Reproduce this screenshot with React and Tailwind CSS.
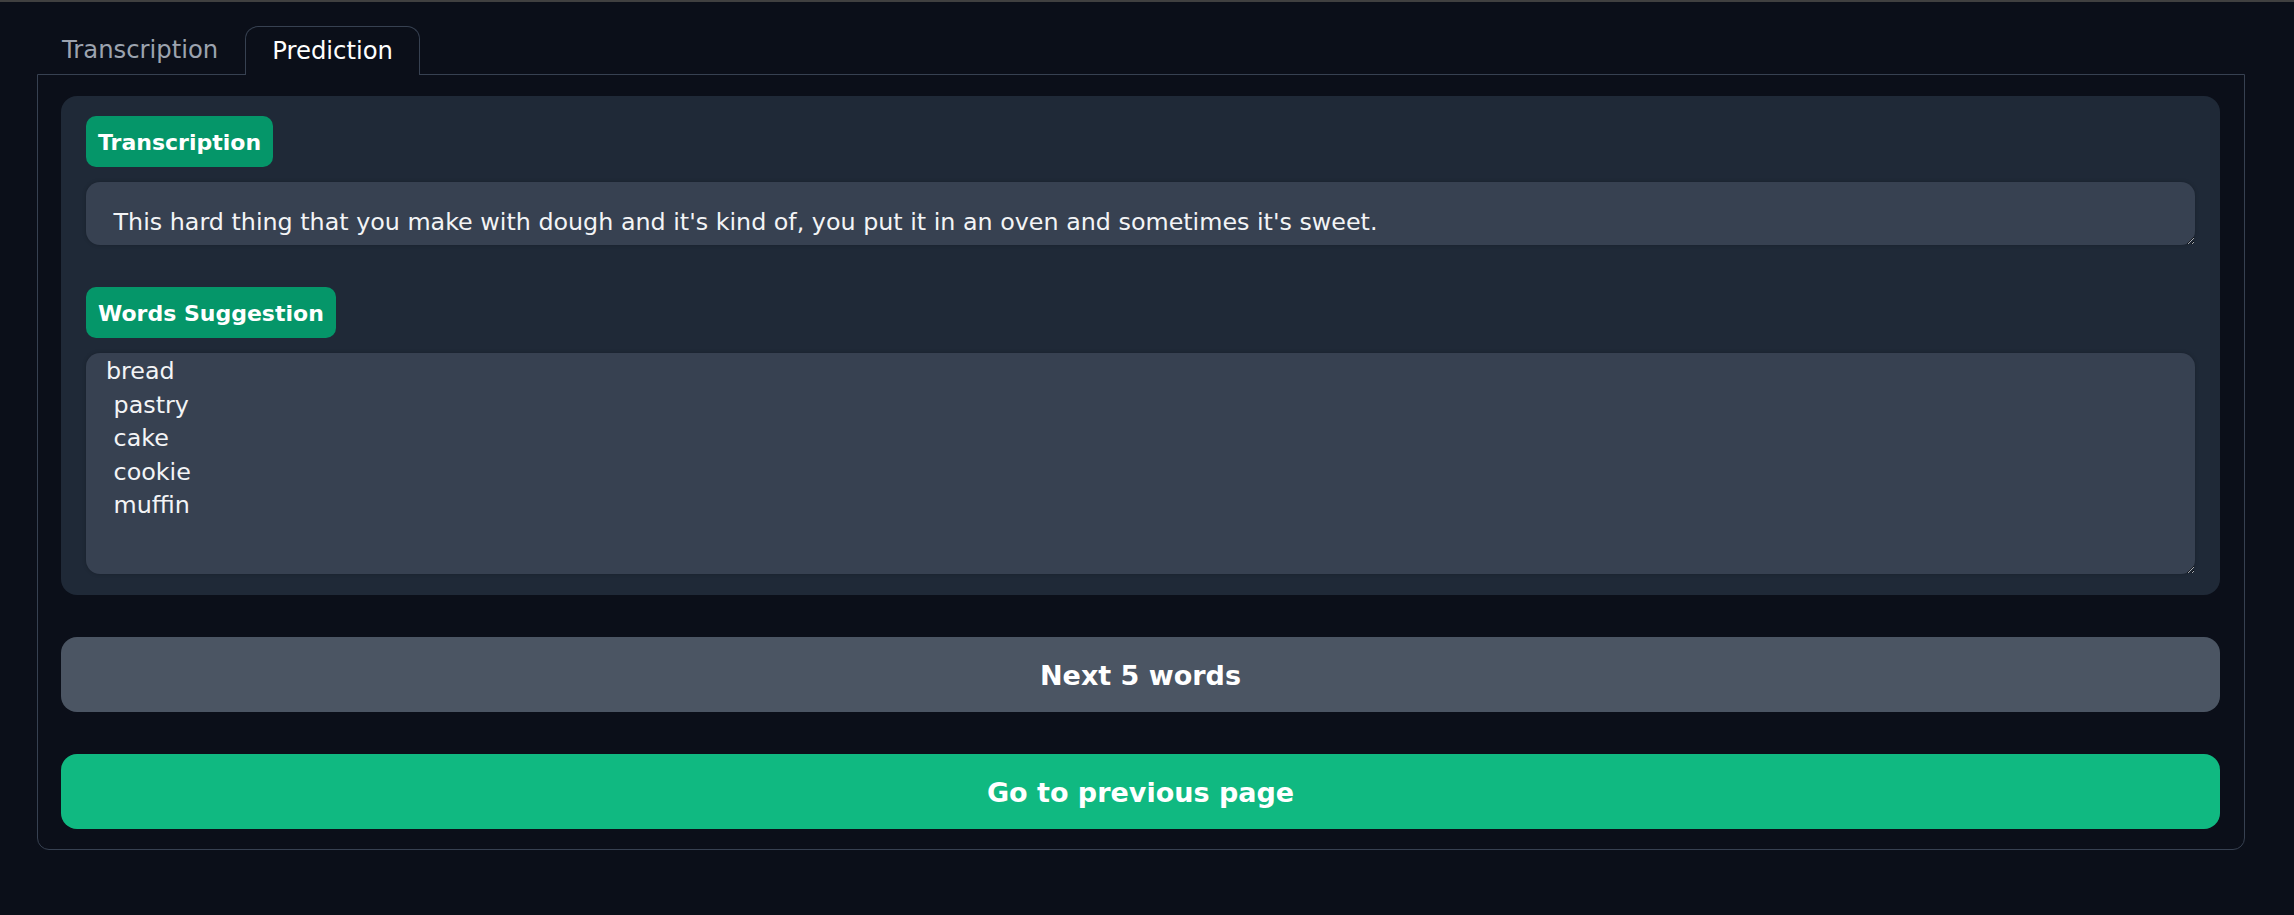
import React from 'react';

const font = { fontFamily: '"DejaVu Sans", Verdana, sans-serif' };

function Label({ children }) {
  return (
    <div className="self-start h-[51px] px-[12px] pt-[2px] flex items-center rounded-[10px] bg-[#059669] text-white font-bold text-[22px]">
      {children}
    </div>
  );
}

export default function App() {
  const sentence = " This hard thing that you make with dough and it's kind of, you put it in an oven and sometimes it's sweet.";
  const words = 'bread\n pastry\n cake\n cookie\n muffin';

  return (
    <div className="min-h-[915px] bg-[#0b0f19]" style={font}>
      <div className="h-[2px] bg-[#404040]" />

      <div className="pt-[24px] pl-[37px]">
        {/* tabs */}
        <div className="flex items-end">
          <button className="h-[48px] pl-[24px] pr-[26px] text-[24.3px] text-[#9ca3af] border border-transparent">
            Transcription
          </button>
          <button className="relative z-10 -mb-px h-[49px] px-[26px] text-[24.3px] text-white bg-[#0b0f19] border border-b-0 border-[#374151] rounded-t-[13px]">
            Prediction
          </button>
        </div>

        {/* panel */}
        <div className="w-[2208px] border border-[#374151] rounded-b-[12px] pt-[21px] pl-[23px] pr-[24px] pb-[20px] flex flex-col gap-[42px]">
          <div className="bg-[#1f2937] rounded-[16px] px-[25px] pt-[20px] pb-[21px] flex flex-col">
            <Label>Transcription</Label>
            <textarea
              readOnly
              value={sentence}
              className="mt-[15px] h-[63px] w-full rounded-[14px] bg-[#374151] text-[#f3f4f6] text-[23.8px] leading-[33.5px] pt-[24px] px-[20px] pb-0 overflow-hidden outline-none [color-scheme:dark] shadow-[0_0_4px_rgba(0,0,0,0.2)]"
              style={font}
            />
            <div className="mt-[42px] flex">
              <Label>Words Suggestion</Label>
            </div>
            <textarea
              readOnly
              value={words}
              className="mt-[15px] h-[221px] w-full rounded-[14px] bg-[#374151] text-[#f3f4f6] text-[23.8px] leading-[33.5px] pt-[2px] px-[20px] pb-0 overflow-hidden outline-none [color-scheme:dark] shadow-[0_0_4px_rgba(0,0,0,0.2)]"
              style={font}
            />
          </div>

          <button className="h-[75px] w-full pt-[3px] rounded-[16px] bg-[#4b5563] text-white font-bold text-[27px]">
            Next 5 words
          </button>
          <button className="h-[75px] w-full pt-[3px] rounded-[16px] bg-[#10b981] text-white font-bold text-[27px]">
            Go to previous page
          </button>
        </div>
      </div>
    </div>
  );
}
